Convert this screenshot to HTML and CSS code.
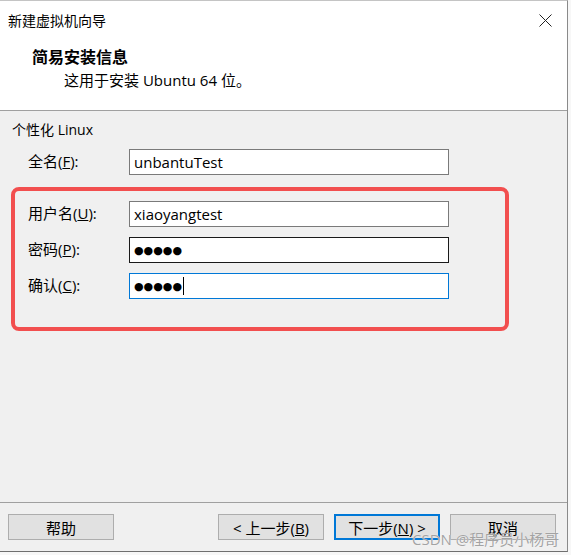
FILE: index.html
```html
<!DOCTYPE html>
<html lang="zh-CN">
<head>
  <meta charset="UTF-8" />
  <title>新建虚拟机向导</title>
  <link rel="stylesheet" href="styles.css">
</head>
<body>

  <div class="window">

    <div class="header">
      <div class="titlebar">
        <span>新建虚拟机向导</span>
        <svg class="close" width="13" height="13" viewBox="0 0 13 13">
          <path d="M0.5 0.5 L12.5 12.5 M12.5 0.5 L0.5 12.5" stroke="#222" stroke-width="1" fill="none" />
        </svg>
      </div>
      <div class="heading">简易安装信息</div>
      <div class="subtitle">这用于安装 Ubuntu 64 位。</div>
    </div>

    <div class="content">
      <div class="group-title">个性化 Linux</div>

      <div class="row row-out">
        <label class="label">全名(<u>F</u>):</label>
        <div class="field">unbantuTest</div>
      </div>

      <div class="mark">
        <div class="row">
          <label class="label">用户名(<u>U</u>):</label>
          <div class="field">xiaoyangtest</div>
        </div>
        <div class="row">
          <label class="label">密码(<u>P</u>):</label>
          <div class="field field-dark"><span class="dots">●●●●●</span></div>
        </div>
        <div class="row">
          <label class="label">确认(<u>C</u>):</label>
          <div class="field field-focus"><span class="dots">●●●●●</span><span class="caret"></span></div>
        </div>
      </div>
    </div>

    <div class="footer">
      <button class="btn">帮助</button>
      <button class="btn btn-back">&lt; 上一步(<u>B</u>)</button>
      <button class="btn btn-next">下一步(<u>N</u>) &gt;</button>
      <button class="btn">取消</button>
    </div>

  </div>

  <div class="watermark">CSDN @程序员小杨哥</div>

</body>
</html>
```

FILE: styles.css
```css
body {
  margin: 0;
  width: 571px;
  height: 555px;
  background: #f7f7f7;
  font-family: "Segoe UI", "Open Sans", "Noto Sans CJK SC", sans-serif;
  font-size: 14px;
  color: #000;
  position: relative;
  overflow: hidden;
}

.window {
  width: 567px;
  height: 550px;
  background: #f0f0f0;
  border-top: 1px solid #c4c4c4;
  border-right: 1px solid #8a8a8a;
  border-bottom: 1px solid #6f6f6f;
  display: flex;
  flex-direction: column;
}

.header {
  height: 109px;
  background: #fff;
  border-bottom: 1px solid #a0a0a0;
}

.titlebar {
  height: 39px;
  padding-left: 8px;
  padding-right: 15px;
  display: flex;
  align-items: center;
  justify-content: space-between;
  line-height: 20px;
}

.heading {
  margin-top: 7px;
  padding-left: 32px;
  font-weight: bold;
  font-size: 16px;
  line-height: 20px;
}

.subtitle {
  margin-top: 3px;
  padding-left: 64px;
  font-size: 15px;
  line-height: 20px;
}

.content {
  flex: 1;
  padding: 9px 0 0 11px;
}

.group-title {
  padding-left: 1px;
  line-height: 20px;
  margin-bottom: 9px;
}

.row {
  display: flex;
  align-items: center;
  height: 26px;
}

.row + .row {
  margin-top: 10px;
}

.row-out {
  padding-left: 17px;
}

.label {
  width: 101px;
  flex-shrink: 0;
  font-size: 15px;
  line-height: 20px;
  margin-top: -2px;
}

.field {
  width: 310px;
  height: 24px;
  padding: 0 4px;
  background: #fff;
  border: 1px solid #7a7a7a;
  display: flex;
  align-items: center;
  font-size: 15px;
}

.field-dark {
  border-color: #1a1a1a;
}

.field-focus {
  border-color: #0078d7;
}

.dots {
  font-family: "DejaVu Sans", sans-serif;
  font-size: 11px;
  letter-spacing: 0;
}

.caret {
  display: inline-block;
  width: 1px;
  height: 18px;
  margin-left: 1px;
  background: #000;
}

.mark {
  width: 477px;
  margin-top: 12px;
  padding: 10px 0 28px 13px;
  border: 4px solid #f24f4f;
  border-radius: 8px;
}

.footer {
  height: 37px;
  padding: 11px 11px 0 8px;
  border-top: 1px solid #a0a0a0;
  display: flex;
  align-items: flex-start;
  gap: 10px;
}

.btn {
  width: 106px;
  height: 26px;
  padding: 0;
  background: #e1e1e1;
  border: 1px solid #adadad;
  font-family: inherit;
  font-size: 15px;
  color: #000;
}

.btn-back {
  margin-left: auto;
}

.btn-next {
  border: 2px solid #0078d7;
}

.watermark {
  position: absolute;
  left: 412px;
  top: 528px;
  font-size: 15px;
  color: #a3a3a3;
  text-shadow: 0 0 1px #fff;
}
```
